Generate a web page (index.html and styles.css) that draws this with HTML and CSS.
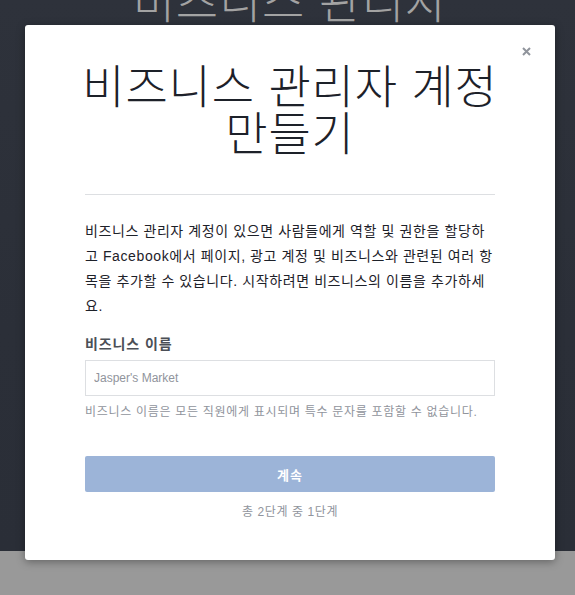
FILE: index.html
```html
<!DOCTYPE html>
<html lang="ko">
<head>
<meta charset="utf-8">
<link rel="stylesheet" href="styles.css">
</head>
<body>
<div class="page">
  <div class="hero">
    <h1 class="hero-title">비즈니스 관리자 계정 만들기</h1>
  </div>
  <div class="below"></div>
</div>
<div class="modal">
  <button class="close" aria-label="닫기">
    <svg width="9" height="9" viewBox="0 0 9 9"><path d="M1 1L8 8M8 1L1 8" stroke="#90949c" stroke-width="2"/></svg>
  </button>
  <h2 class="title">비즈니스 관리자 계정 만들기</h2>
  <hr class="divider">
  <p class="desc">비즈니스 관리자 계정이 있으면 사람들에게 역할 및 권한을 할당하<br>고 Facebook에서 페이지, 광고 계정 및 비즈니스와 관련된 여러 항<br>목을 추가할 수 있습니다. 시작하려면 비즈니스의 이름을 추가하세<br>요.</p>
  <label class="label" for="bn">비즈니스 이름</label>
  <input class="input" id="bn" type="text" placeholder="Jasper's Market">
  <p class="help">비즈니스 이름은 모든 직원에게 표시되며 특수 문자를 포함할 수 없습니다.</p>
  <button class="continue">계속</button>
  <p class="step">총 2단계 중 1단계</p>
</div>
</body>
</html>
```
FILE: styles.css
```css
* { box-sizing: border-box; }
html, body { margin: 0; padding: 0; }
body {
  width: 575px;
  height: 595px;
  overflow: hidden;
  font-family: "Liberation Sans", "Noto Sans CJK KR", sans-serif;
}
.page { display: flex; flex-direction: column; height: 595px; }
.hero {
  height: 551px;
  background: linear-gradient(180deg, #2e323b 0%, #2b2f38 60%, #2a2e37 100%);
  display: flex;
  justify-content: center;
  overflow: hidden;
}
.hero-title {
  margin: -25px 0 0 6px;
  width: 340px;
  text-align: center;
  font-family: "Noto Sans CJK KR", sans-serif;
  font-weight: 300;
  font-size: 46px;
  line-height: 47px;
  letter-spacing: 0.8px;
  color: #a3a3a3;
}
.below { flex: 1; background: #999999; }
.modal {
  position: absolute;
  top: 25px;
  left: 25px;
  width: 530px;
  height: 535px;
  background: #fff;
  border-radius: 3px;
  box-shadow: 0 2px 8px rgba(0,0,0,.35);
  padding: 35px 60px 0;
  display: flex;
  flex-direction: column;
}
.close {
  position: absolute;
  top: 22px;
  right: 24px;
  border: 0;
  background: none;
  padding: 0;
  width: 9px;
  height: 9px;
  line-height: 0;
}
.title {
  margin: 0 -12px;
  text-align: center;
  font-family: "Noto Sans CJK KR", sans-serif;
  font-weight: 300;
  font-size: 46px;
  line-height: 47px;
  letter-spacing: 0.8px;
  color: #1d2129;
}
.divider {
  margin: 40px 0 0;
  border: 0;
  border-top: 1px solid #dddfe2;
}
.desc {
  margin: 24px 0 0;
  font-size: 14px;
  line-height: 25px;
  letter-spacing: 0.6px;
  white-space: nowrap;
  color: #1d2129;
}
.label {
  margin-top: 16px;
  font-size: 14px;
  font-weight: bold;
  line-height: 18px;
  letter-spacing: 0.9px;
  color: #4b4f56;
}
.input {
  margin-top: 7px;
  height: 36px;
  border: 1px solid #dddfe2;
  padding: 0 8px;
  font-family: "Liberation Sans", sans-serif;
  font-size: 12px;
  color: #1d2129;
  outline: none;
}
.input::placeholder { color: #90949c; }
.help {
  margin: 8px 0 0;
  font-size: 12px;
  line-height: 16px;
  letter-spacing: 0.7px;
  color: #90949c;
}
.continue {
  margin-top: 36px;
  height: 36px;
  border: 0;
  border-radius: 2px;
  background: #9cb4d8;
  color: #fff;
  font-family: "Liberation Sans", "Noto Sans CJK KR", sans-serif;
  font-weight: bold;
  font-size: 13px;
  letter-spacing: 1px;
}
.step {
  margin: 12px 0 0;
  text-align: center;
  font-size: 12px;
  line-height: 16px;
  letter-spacing: 0.6px;
  color: #90949c;
}
```
